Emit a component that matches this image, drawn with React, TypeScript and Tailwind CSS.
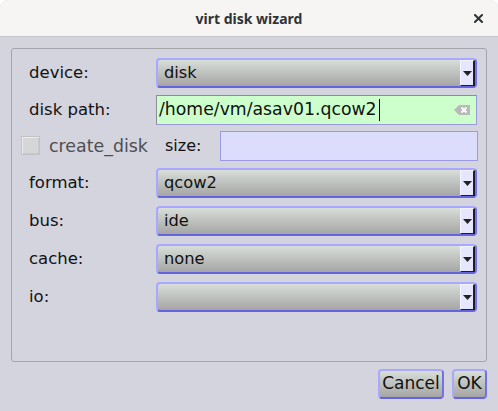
import React from "react";

const font = { fontFamily: '"DejaVu Sans", "Liberation Sans", sans-serif' };

function Arrow() {
  return (
    <div className="flex h-full w-[15px] shrink-0 items-center justify-center border-l border-t border-l-[#f4f4ff] border-t-[#f4f4ff] border-r-2 border-b border-r-[#1c1c2a] border-b-[#1c1c2a] bg-[#e6e6ff]">
      <svg width="9" height="5" viewBox="0 0 9 5" className="mt-[1px]">
        <polygon points="0,0 9,0 4.5,5" fill="#222" />
      </svg>
    </div>
  );
}

function Combo({ value }: { value: string }) {
  return (
    <div className="flex h-[30px] flex-1 items-stretch rounded-[4px] border-2 border-t-[#a8a8ff] border-l-[#a8a8ff] border-r-[#7272e6] border-b-[#6464dc] bg-linear-to-b from-[#d8ded9] to-[#a5a5a5]">
      <div className="flex flex-1 items-center pl-[6px] text-[16.3px] text-[#111]">{value}</div>
      <Arrow />
    </div>
  );
}

function Row({ label, children, mt }: { label: string; children: React.ReactNode; mt: string }) {
  return (
    <div className={`flex items-center pl-[17px] pr-[9px] ${mt}`}>
      <div className="w-[127px] shrink-0 text-[16.5px] text-[#111]">{label}</div>
      {children}
    </div>
  );
}

export default function App() {
  return (
    <div className="h-[411px] w-[498px] overflow-hidden bg-white" style={font}>
      <div className="flex h-full w-full flex-col overflow-hidden rounded-t-[8px] bg-[#d4d4de]">
        <div className="relative flex h-[37px] shrink-0 items-center justify-center border-b border-[#c4c4c8] bg-[#f6f5f4]">
          <span
            className="text-[14px] font-bold text-[#2e3436]"
            style={{ fontFamily: '"Noto Sans", "DejaVu Sans", sans-serif' }}
          >
            virt disk wizard
          </span>
          <svg width="9" height="9" viewBox="0 0 9 9" className="absolute right-[15px] top-[14px]">
            <path d="M1 1 L8 8 M8 1 L1 8" stroke="#2e3436" strokeWidth="2" strokeLinecap="square" />
          </svg>
        </div>
        <div className="flex flex-1 flex-col px-[11px] pt-[11px]">
          <div className="flex h-[314px] flex-col rounded-[3px] border border-[#a4a4ac] pt-[9px]">
            <Row label="device:" mt="">
              <Combo value="disk" />
            </Row>
            <Row label="disk path:" mt="mt-[7px]">
              <div className="flex h-[30px] flex-1 items-center border border-t-[#8e8e96] border-l-[#8e8e96] border-r-[#9a9ad8] border-b-[#9a9ad8] bg-[#ccffcc] pl-[2px] pr-[4px]">
                <span className="text-[17.3px] text-[#111]">/home/vm/asav01.qcow2</span>
                <span className="ml-[2px] h-[22px] w-px bg-black" />
                <div className="flex-1" />
                <svg width="16" height="10" viewBox="0 0 16 10" className="mr-[2px]">
                  <path d="M0 5 L5 0 H16 V10 H5 Z" fill="#b9b9b9" />
                  <path d="M7.5 2.5 L12.5 7.5 M12.5 2.5 L7.5 7.5" stroke="#ffffff" strokeWidth="1.8" />
                </svg>
              </div>
            </Row>
            <div className="mt-[6px] flex h-[30px] items-center pl-[9px] pr-[8px]">
              <div className="flex w-[144px] shrink-0 items-center">
                <div className="h-[19px] w-[19px] border border-[#c2c2c6] bg-[#d6d6d8] shadow-[inset_1px_1px_0_#ececee,inset_-1px_-1px_0_#c8c8cc]" />
                <span className="ml-[9px] text-[17.4px] text-[#4e4e52]">create_disk</span>
              </div>
              <div className="w-[55px] shrink-0 text-[16px] text-[#111]">size:</div>
              <div className="h-[30px] flex-1 border border-[#9a9ae6] bg-[#dcdcfd]" />
            </div>
            <Row label="format:" mt="mt-[7px]">
              <Combo value="qcow2" />
            </Row>
            <Row label="bus:" mt="mt-[8px]">
              <Combo value="ide" />
            </Row>
            <Row label="cache:" mt="mt-[8px]">
              <Combo value="none" />
            </Row>
            <Row label="io:" mt="mt-[8px]">
              <Combo value="" />
            </Row>
          </div>
          <div className="mt-[7px] flex justify-end gap-[8px]">
            <div className="flex h-[30px] w-[66px] items-center justify-center rounded-[4px] border-2 border-t-[#a8a8ff] border-l-[#a8a8ff] border-r-[#7272e6] border-b-[#6464dc] bg-linear-to-b from-[#d8ded9] to-[#a5a5a5] text-[17px] text-[#111]">
              Cancel
            </div>
            <div className="flex h-[30px] w-[35px] items-center justify-center rounded-[4px] border-2 border-t-[#a8a8ff] border-l-[#a8a8ff] border-r-[#7272e6] border-b-[#6464dc] bg-linear-to-b from-[#d8ded9] to-[#a5a5a5] text-[17px] text-[#111]">
              OK
            </div>
          </div>
        </div>
      </div>
    </div>
  );
}
